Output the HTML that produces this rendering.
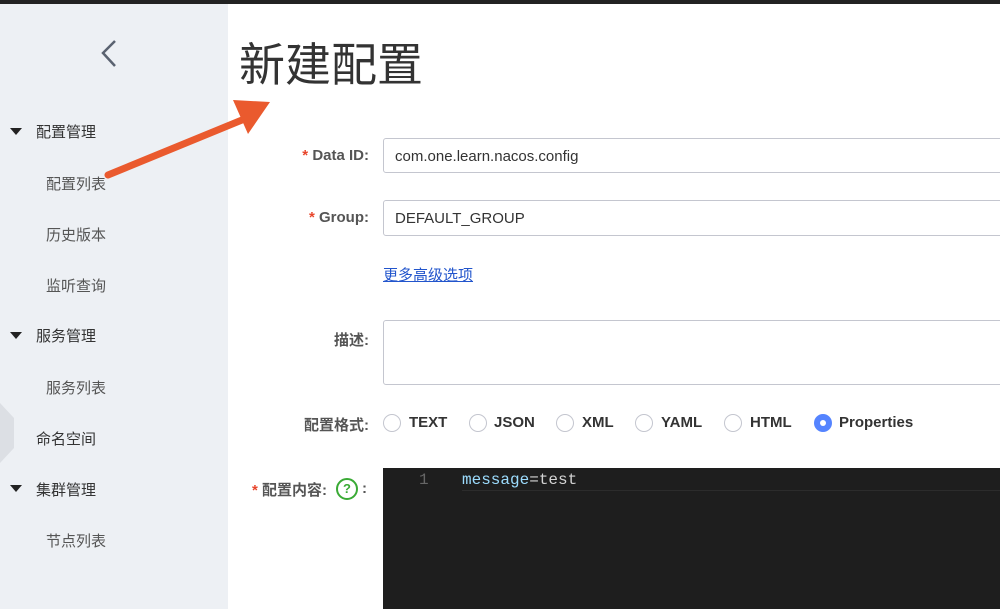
<!DOCTYPE html><html><head><meta charset="utf-8"><style>
body{margin:0;width:1000px;height:609px;overflow:hidden;background:#fff;font-family:"Liberation Sans","Noto Sans CJK SC",sans-serif;position:relative}
.a{position:absolute}
.side{left:0;top:0;width:228px;height:609px;background:#edf0f4}
.top{left:0;top:0;width:1000px;height:4px;background:#222}
.m{font-size:15px;color:#333}
.s{font-size:15px;color:#555}
.tri{width:0;height:0;border-left:6px solid transparent;border-right:6px solid transparent;border-top:7px solid #222}
.lab{font-size:15px;color:#555;font-weight:bold;text-align:right;width:140px;left:229px}
.st{color:#e8452b}
.inp{left:383px;width:640px;border:1px solid #c4c6cf;border-radius:3px;background:#fff;font-size:15px;color:#333;box-sizing:border-box;padding-left:11px}
.r{width:18px;height:18px;border:1px solid #c4c6cf;border-radius:50%;box-sizing:border-box;top:414px}
.rt{font-size:15px;font-weight:bold;color:#333;top:414px}
</style></head><body>
<div class="a side"></div>
<div class="a top"></div>
<div class="a" style="left:0;top:403px;width:14px;height:60px;background:#dcdfe4;clip-path:polygon(0 0,100% 25%,100% 75%,0 100%)"></div>
<svg class="a" style="left:98px;top:39px" width="22" height="30"><path d="M17 2 L5 14 L17 27" stroke="#5a6270" stroke-width="2.5" fill="none"/></svg>
<div class="a tri" style="left:10px;top:128px"></div><div class="a m" style="left:36px;top:121px">配置管理</div>
<div class="a s" style="left:46px;top:173px">配置列表</div>
<div class="a s" style="left:46px;top:224px">历史版本</div>
<div class="a s" style="left:46px;top:275px">监听查询</div>
<div class="a tri" style="left:10px;top:332px"></div><div class="a m" style="left:36px;top:325px">服务管理</div>
<div class="a s" style="left:46px;top:377px">服务列表</div>
<div class="a m" style="left:36px;top:428px">命名空间</div>
<div class="a tri" style="left:10px;top:485px"></div><div class="a m" style="left:36px;top:479px">集群管理</div>
<div class="a s" style="left:46px;top:530px">节点列表</div>
<div class="a" style="left:239px;top:35px;font-size:46px;color:#333;line-height:60px">新建配置</div>
<div class="a lab" style="top:147px"><span class="st">* </span>Data ID:</div>
<div class="a inp" style="top:138px;height:35px;line-height:35px">com.one.learn.nacos.config</div>
<div class="a lab" style="top:209px"><span class="st">* </span>Group:</div>
<div class="a inp" style="top:200px;height:36px;line-height:36px">DEFAULT_GROUP</div>
<div class="a" style="left:383px;top:264px;font-size:15px;color:#2255cc;text-decoration:underline">更多高级选项</div>
<div class="a lab" style="top:329px">描述:</div>
<div class="a inp" style="top:320px;height:65px"></div>
<div class="a lab" style="top:414px">配置格式:</div>
<div class="a r" style="left:383px"></div><div class="a rt" style="left:409px">TEXT</div>
<div class="a r" style="left:469px"></div><div class="a rt" style="left:494px">JSON</div>
<div class="a r" style="left:556px"></div><div class="a rt" style="left:582px">XML</div>
<div class="a r" style="left:635px"></div><div class="a rt" style="left:661px">YAML</div>
<div class="a r" style="left:724px"></div><div class="a rt" style="left:750px">HTML</div>
<div class="a r" style="left:814px;background:#5584ff;border-color:#5584ff"><div class="a" style="left:5px;top:5px;width:6px;height:6px;border-radius:50%;background:#fff"></div></div><div class="a rt" style="left:839px">Properties</div>
<div class="a" style="left:252px;top:479px;font-size:15px;font-weight:bold;color:#555"><span class="st">* </span>配置内容:</div>
<div class="a" style="left:336px;top:478px;width:18px;height:18px;border:2px solid #3aaa35;border-radius:50%;color:#3aaa35;font-size:13px;font-weight:bold;text-align:center;line-height:18px">?</div>
<div class="a" style="left:362px;top:480px;font-size:15px;font-weight:bold;color:#555">:</div>
<div class="a" style="left:383px;top:468px;width:617px;height:141px;background:#1e1e1e"></div>
<div class="a" style="left:462px;top:490px;width:538px;height:1px;background:#2c2c2c"></div>
<div class="a" style="left:419px;top:471px;font-family:'Liberation Mono',monospace;font-size:16px;color:#666">1</div>
<div class="a" style="left:462px;top:471px;font-family:'Liberation Mono',monospace;font-size:16px;color:#9cdcfe">message<span style="color:#d4d4d4">=test</span></div>
<svg class="a" style="left:100px;top:90px" width="180" height="100"><path d="M8 85 L142 30" stroke="#ea5a2e" stroke-width="7" stroke-linecap="round"/><path d="M133 10 L170 12 L148 44 Z" fill="#ea5a2e"/></svg>
</body></html>
